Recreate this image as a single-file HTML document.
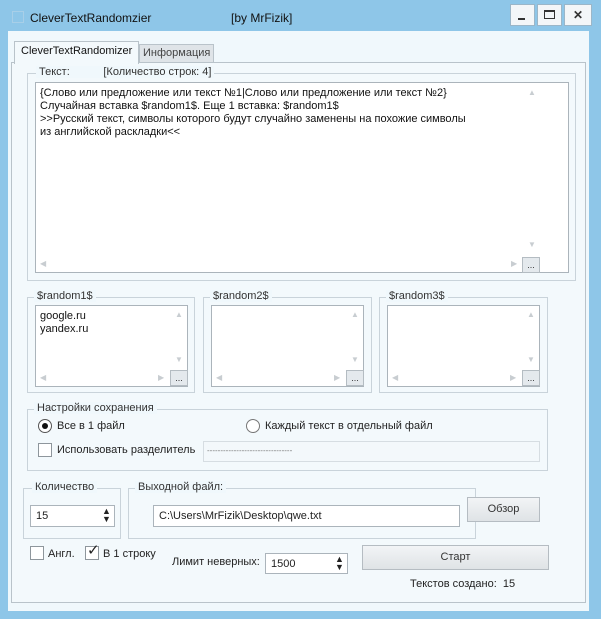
<!DOCTYPE html>
<html><head><meta charset="utf-8"><style>
*{box-sizing:border-box;margin:0;padding:0}
body{width:601px;height:619px;background:#8ec6e8;font-family:"Liberation Sans",sans-serif;font-size:11px;color:#222;position:relative;overflow:hidden}
.a{position:absolute}
.client{left:8px;top:31px;width:581px;height:580px;background:#f0f8fc}
.grp{position:absolute;border:1px solid #c9d3da}
.lbl{position:absolute;top:-8px;background:#f0f8fc;padding:0 3px;color:#333;font-size:11px;white-space:nowrap}
.box{position:absolute;background:#fff;border:1px solid #abb4bb}
.ar{position:absolute;color:#c8cdd1;font-size:8px;line-height:8px}
.dots{position:absolute;width:18px;height:16px;background:#e4e9ed;border:1px solid #b4bcc2;font-size:9px;text-align:center;line-height:14px;color:#333}
.btn{position:absolute;background:linear-gradient(#f2f4f6,#dfe3e6);border:1px solid #b5bcc2;text-align:center;color:#333}
.chk{position:absolute;width:14px;height:14px;border:1px solid #8e969c;background:#fff}
.txt{position:absolute;white-space:nowrap}
.wb{position:absolute;top:4px;height:22px;background:#f3f6f8;border:1px solid #9bb6c8}
</style></head><body>
<div class="a" style="left:12px;top:11px;width:12px;height:12px;border:1px solid #a8cfe8"></div>
<div class="txt" style="left:30px;top:11px;font-size:12px;color:#111">CleverTextRandomzier</div>
<div class="txt" style="left:231px;top:11px;font-size:12px;color:#111">[by MrFizik]</div>
<div class="wb" style="left:510px;width:25px"></div>
<div class="a" style="left:518px;top:18px;width:7px;height:2px;background:#333"></div>
<div class="wb" style="left:537px;width:25px"></div>
<div class="a" style="left:544px;top:10px;width:11px;height:9px;border:1px solid #333;border-top-width:2px"></div>
<div class="wb" style="left:564px;width:28px;text-align:center;font-weight:bold;font-size:12px;line-height:20px;color:#333">✕</div>

<div class="a client"></div>
<div class="a" style="left:11px;top:62px;width:575px;height:541px;border:1px solid #b9c3ca;background:#f3f9fc"></div>
<div class="a" style="left:139px;top:44px;width:75px;height:19px;background:#dfe4e8;border:1px solid #b9c3ca"></div>
<div class="txt" style="left:143px;top:47px;color:#444">Информация</div>
<div class="a" style="left:14px;top:41px;width:125px;height:23px;background:#f3f9fc;border:1px solid #b9c3ca;border-bottom:none"></div>
<div class="txt" style="left:21px;top:45px;color:#111">CleverTextRandomizer</div>

<div class="grp" style="left:27px;top:73px;width:549px;height:208px"><div class="lbl" style="left:8px">Текст:&nbsp;&nbsp;&nbsp;&nbsp;&nbsp;&nbsp;&nbsp;&nbsp;&nbsp;&nbsp;&nbsp;[Количество строк: 4]</div></div>
<div class="box" style="left:35px;top:82px;width:534px;height:191px">
<div class="txt" style="left:4px;top:4px;line-height:13px;color:#111">{Слово или предложение или текст №1|Слово или предложение или текст №2}<br>Случайная вставка $random1$. Еще 1 вставка: $random1$<br>&gt;&gt;Русский текст, символы которого будут случайно заменены на похожие символы<br>из английской раскладки&lt;&lt;</div>
<div class="ar" style="left:492px;top:6px">▲</div><div class="ar" style="left:492px;top:158px">▼</div>
<div class="ar" style="left:4px;top:177px">◀</div><div class="ar" style="left:475px;top:177px">▶</div>
<div class="dots" style="left:486px;top:174px">...</div></div>

<div class="grp" style="left:27px;top:297px;width:168px;height:96px"><div class="lbl" style="left:6px">$random1$</div></div>
<div class="grp" style="left:203px;top:297px;width:169px;height:96px"><div class="lbl" style="left:6px">$random2$</div></div>
<div class="grp" style="left:379px;top:297px;width:169px;height:96px"><div class="lbl" style="left:6px">$random3$</div></div>
<div class="box" style="left:35px;top:305px;width:153px;height:82px"><div class="txt" style="left:4px;top:4px;line-height:13px;color:#111">google.ru<br>yandex.ru</div>
<div class="ar" style="left:139px;top:5px">▲</div><div class="ar" style="left:139px;top:50px">▼</div><div class="ar" style="left:4px;top:68px">◀</div><div class="ar" style="left:122px;top:68px">▶</div><div class="dots" style="left:134px;top:64px">...</div></div>
<div class="box" style="left:211px;top:305px;width:153px;height:82px">
<div class="ar" style="left:139px;top:5px">▲</div><div class="ar" style="left:139px;top:50px">▼</div><div class="ar" style="left:4px;top:68px">◀</div><div class="ar" style="left:122px;top:68px">▶</div><div class="dots" style="left:134px;top:64px">...</div></div>
<div class="box" style="left:387px;top:305px;width:153px;height:82px">
<div class="ar" style="left:139px;top:5px">▲</div><div class="ar" style="left:139px;top:50px">▼</div><div class="ar" style="left:4px;top:68px">◀</div><div class="ar" style="left:122px;top:68px">▶</div><div class="dots" style="left:134px;top:64px">...</div></div>

<div class="grp" style="left:27px;top:409px;width:521px;height:62px"><div class="lbl" style="left:6px">Настройки сохранения</div></div>
<div class="a" style="left:38px;top:419px;width:14px;height:14px;border-radius:50%;border:1px solid #555;background:#fff"></div>
<div class="a" style="left:42px;top:423px;width:6px;height:6px;border-radius:50%;background:#111"></div>
<div class="txt" style="left:57px;top:420px">Все в 1 файл</div>
<div class="a" style="left:246px;top:419px;width:14px;height:14px;border-radius:50%;border:1px solid #777;background:#fff"></div>
<div class="txt" style="left:265px;top:420px">Каждый текст в отдельный файл</div>
<div class="chk" style="left:38px;top:443px"></div>
<div class="txt" style="left:57px;top:444px">Использовать разделитель</div>
<div class="a" style="left:203px;top:441px;width:337px;height:21px;border:1px solid #d6dde2;background:#f3f8fb"></div>
<div class="txt" style="left:207px;top:446px;color:#777;font-size:8px">--------------------------------</div>

<div class="grp" style="left:23px;top:488px;width:98px;height:51px"><div class="lbl" style="left:8px">Количество</div></div>
<div class="box" style="left:30px;top:505px;width:85px;height:22px"><div class="txt" style="left:5px;top:4px">15</div><div class="txt" style="left:71px;top:1px;font-size:9px;line-height:8px">▲<br>▼</div></div>
<div class="grp" style="left:128px;top:488px;width:348px;height:51px"><div class="lbl" style="left:6px">Выходной файл:</div></div>
<div class="box" style="left:153px;top:505px;width:307px;height:22px"><div class="txt" style="left:5px;top:4px">C:\Users\MrFizik\Desktop\qwe.txt</div></div>
<div class="btn" style="left:467px;top:497px;width:73px;height:25px;line-height:23px">Обзор</div>

<div class="chk" style="left:30px;top:546px"></div>
<div class="txt" style="left:48px;top:548px">Англ.</div>
<div class="chk" style="left:85px;top:546px"></div>
<div class="txt" style="left:87px;top:541px;font-size:15px;color:#222">✓</div>
<div class="txt" style="left:103px;top:548px">В 1 строку</div>
<div class="txt" style="left:172px;top:556px">Лимит неверных:</div>
<div class="box" style="left:265px;top:553px;width:83px;height:21px"><div class="txt" style="left:5px;top:4px">1500</div><div class="txt" style="left:69px;top:1px;font-size:9px;line-height:8px">▲<br>▼</div></div>
<div class="btn" style="left:362px;top:545px;width:187px;height:25px;line-height:23px">Старт</div>
<div class="txt" style="left:410px;top:578px">Текстов создано:&nbsp;&nbsp;15</div>
</body></html>
